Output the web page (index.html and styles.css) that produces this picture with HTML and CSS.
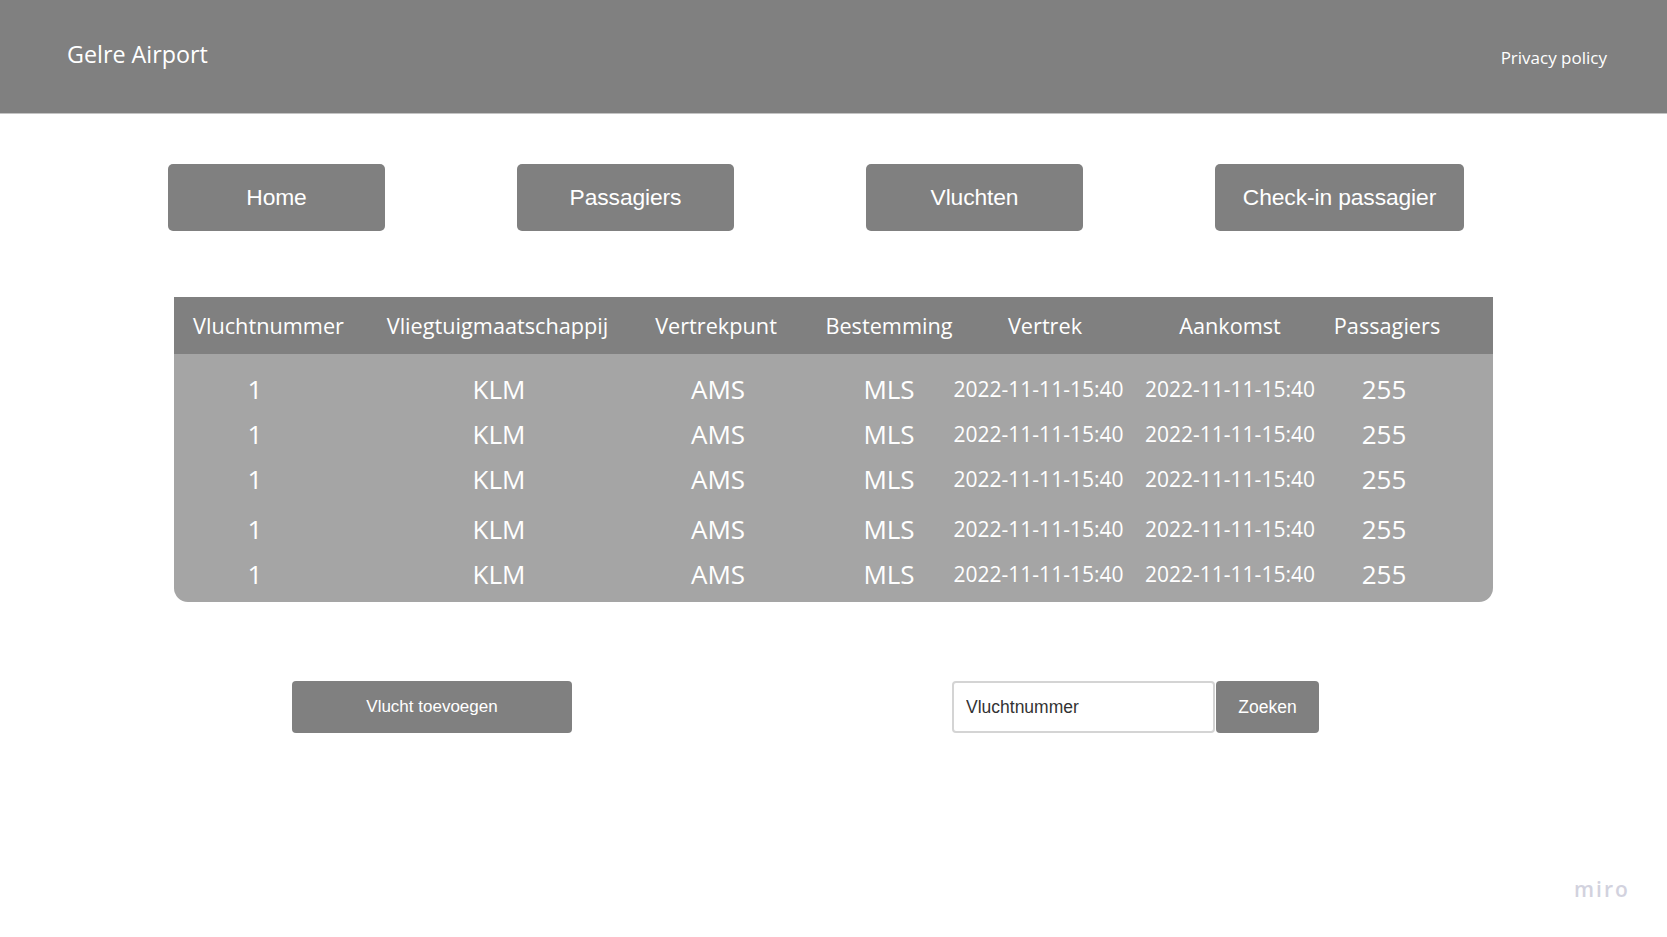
FILE: index.html
```html
<!DOCTYPE html>
<html lang="nl">
<head>
<meta charset="utf-8">
<title>Gelre Airport - Vluchten</title>
<link rel="stylesheet" href="styles.css">
</head>
<body>
<header class="topbar">
  <div class="brand">Gelre Airport</div>
  <a class="privacy" href="#">Privacy policy</a>
</header>

<nav class="mainnav">
  <a class="navbtn" href="#">Home</a>
  <a class="navbtn" href="#">Passagiers</a>
  <a class="navbtn" href="#">Vluchten</a>
  <a class="navbtn wide" href="#">Check-in passagier</a>
</nav>

<section class="flights">
  <div class="row head">
    <div class="cell">Vluchtnummer</div>
    <div class="cell">Vliegtuigmaatschappij</div>
    <div class="cell">Vertrekpunt</div>
    <div class="cell">Bestemming</div>
    <div class="cell">Vertrek</div>
    <div class="cell">Aankomst</div>
    <div class="cell">Passagiers</div>
  </div>
  <div class="tbody">
    <div class="row">
      <div class="cell c-num">1</div><div class="cell c-air">KLM</div><div class="cell c-from">AMS</div><div class="cell">MLS</div>
      <div class="cell date c-dep">2022-11-11-15:40</div><div class="cell date">2022-11-11-15:40</div><div class="cell c-pax">255</div>
    </div>
    <div class="row">
      <div class="cell c-num">1</div><div class="cell c-air">KLM</div><div class="cell c-from">AMS</div><div class="cell">MLS</div>
      <div class="cell date c-dep">2022-11-11-15:40</div><div class="cell date">2022-11-11-15:40</div><div class="cell c-pax">255</div>
    </div>
    <div class="row">
      <div class="cell c-num">1</div><div class="cell c-air">KLM</div><div class="cell c-from">AMS</div><div class="cell">MLS</div>
      <div class="cell date c-dep">2022-11-11-15:40</div><div class="cell date">2022-11-11-15:40</div><div class="cell c-pax">255</div>
    </div>
    <div class="row spaced">
      <div class="cell c-num">1</div><div class="cell c-air">KLM</div><div class="cell c-from">AMS</div><div class="cell">MLS</div>
      <div class="cell date c-dep">2022-11-11-15:40</div><div class="cell date">2022-11-11-15:40</div><div class="cell c-pax">255</div>
    </div>
    <div class="row">
      <div class="cell c-num">1</div><div class="cell c-air">KLM</div><div class="cell c-from">AMS</div><div class="cell">MLS</div>
      <div class="cell date c-dep">2022-11-11-15:40</div><div class="cell date">2022-11-11-15:40</div><div class="cell c-pax">255</div>
    </div>
  </div>
</section>

<section class="actions">
  <button class="addbtn" type="button">Vlucht toevoegen</button>
  <form class="search">
    <input class="search-input" type="text" placeholder="Vluchtnummer">
    <button class="search-btn" type="button">Zoeken</button>
  </form>
</section>

<div class="watermark">miro</div>
</body>
</html>
```

FILE: styles.css
```css
html, body {
  margin: 0;
  padding: 0;
  background: #ffffff;
}

body {
  font-family: "Open Sans", "Noto Sans", sans-serif;
  color: #ffffff;
  width: 1667px;
  height: 937px;
  overflow: hidden;
  position: relative;
}

.topbar {
  height: 113px;
  background: #808080;
  border-bottom: 1px solid #c4c4c4;
  display: flex;
  align-items: center;
  justify-content: space-between;
  padding: 0 60px 0 67px;
}

.brand {
  font-size: 23.3px;
  margin-top: -5px;
}

.privacy {
  font-size: 17px;
  color: #ffffff;
  text-decoration: none;
  margin-top: 2px;
}

.mainnav {
  display: flex;
  gap: 132px;
  padding-left: 168px;
  margin-top: 50px;
}

.navbtn {
  width: 217px;
  height: 67px;
  background: #808080;
  border-radius: 5px;
  display: flex;
  align-items: center;
  justify-content: center;
  font-family: "Liberation Sans", Arial, sans-serif;
  font-size: 22.8px;
  color: #ffffff;
  text-decoration: none;
  letter-spacing: -0.1px;
}

.navbtn.wide {
  width: 249px;
}

.flights {
  margin: 66px 0 0 174px;
  width: 1319px;
  background: #a5a5a5;
  border-radius: 0 0 14px 14px;
  overflow: hidden;
}

.row {
  display: grid;
  grid-template-columns: 189px 269px 168px 178px 134px 236px 78px 1fr;
  justify-items: center;
  align-items: center;
  height: 45px;
  font-size: 26px;
  white-space: nowrap;
}

.row.head {
  height: 57px;
  background: #808080;
  font-size: 21.7px;
}

.tbody {
  padding: 12px 0 6px;
}

.row.spaced {
  margin-top: 5px;
}

.cell {
  white-space: nowrap;
}

.cell.date {
  font-size: 21px;
}

.c-num {
  padding-right: 27px;
}

.c-air {
  padding-left: 3px;
}

.c-from {
  padding-left: 4px;
}

.c-dep {
  padding-right: 13px;
}

.c-pax {
  padding-right: 6px;
}

.actions {
  display: flex;
  align-items: center;
  margin-top: 79px;
  padding-left: 292px;
}

.addbtn {
  width: 280px;
  height: 52px;
  background: #808080;
  border: none;
  border-radius: 4px;
  color: #ffffff;
  font-family: "Liberation Sans", Arial, sans-serif;
  font-size: 17px;
  padding: 0;
}

.search {
  display: flex;
  margin: 0 0 0 380px;
}

.search-input {
  box-sizing: border-box;
  width: 263px;
  height: 52px;
  border: 2px solid #d4d4d4;
  border-radius: 4px;
  padding: 0 12px;
  font-family: "Liberation Sans", Arial, sans-serif;
  font-size: 17.5px;
  color: #333333;
  outline: none;
}

.search-input::placeholder {
  color: #333333;
  opacity: 1;
}

.search-btn {
  width: 103px;
  height: 52px;
  margin-left: 1px;
  background: #808080;
  border: none;
  border-radius: 4px;
  color: #ffffff;
  font-family: "Liberation Sans", Arial, sans-serif;
  font-size: 17.5px;
  padding: 0;
}

.watermark {
  position: absolute;
  left: 1574px;
  top: 875px;
  font-family: "Open Sans", sans-serif;
  font-weight: 600;
  font-size: 21px;
  letter-spacing: 2px;
  color: #d2d2de;
}
```
